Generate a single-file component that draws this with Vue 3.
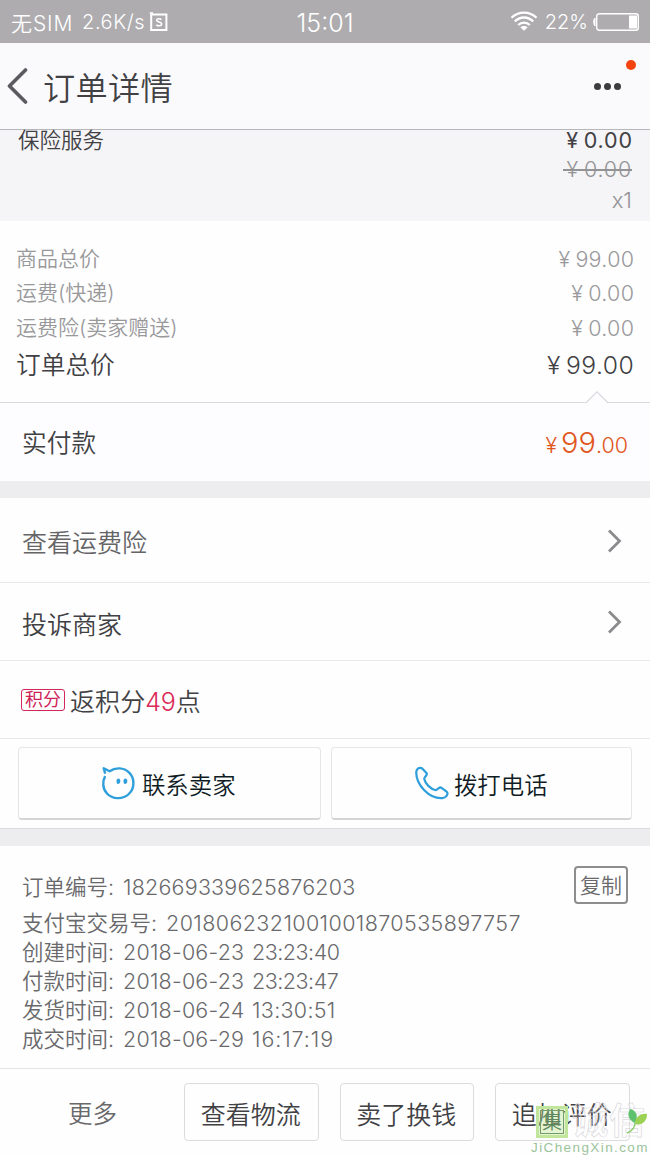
<script setup>
const fees = [
  { label: '商品总价', amount: '99.00' },
  { label: '运费(快递)', amount: '0.00' },
  { label: '运费险(卖家赠送)', amount: '0.00' },
]
const times = [
  { label: '创建时间:', date: '2018-06-23', time: '23:23:40', fit: 'tight' },
  { label: '付款时间:', date: '2018-06-23', time: '23:23:47', fit: 'tight' },
  { label: '发货时间:', date: '2018-06-24', time: '13:30:51', fit: 'wide' },
  { label: '成交时间:', date: '2018-06-29', time: '16:17:19', fit: 'loose' },
]
</script>

<template>
  <div class="screen">
    <div class="status">
      <div class="carrier">
        <span class="sim">无SIM</span><span class="speed">2.6K/s</span>
        <svg width="20" height="20" viewBox="0 0 20 20" fill="none" stroke="#fff">
          <path d="M2.2 2.5H17.4V18H2.2Z" stroke-width="2" />
          <path d="M.8 1H4" stroke-width="1.6" />
          <path d="M12.4 7.6C11 6.3 7.6 6.5 7.7 8.5C7.8 10.5 12.6 9.5 12.6 12C12.6 14.2 8.8 14.2 7.3 12.8" stroke-width="1.6" />
        </svg>
      </div>
      <div class="clock">15:01</div>
      <div class="power">
        <svg class="wifi" width="28" height="21" viewBox="0 0 28 21" fill="none" stroke="#fff" stroke-width="2.3">
          <path d="M1.5 6.7C8.5-.2 19.5-.2 26.5 6.7" />
          <path d="M4.8 10.4C10.2 5.2 17.8 5.2 23.2 10.4" />
          <path d="M8.2 14C11.6 10.7 16.4 10.7 19.8 14" />
          <path d="M10.3 16.3C12.4 14.4 15.6 14.4 17.7 16.3L14 19.7Z" fill="#fff" stroke="none" />
        </svg>
        <span class="percent">22%</span>
        <svg class="battery" width="47" height="20" viewBox="0 0 47 20">
          <rect x="3.7" y="1.7" width="41.6" height="16.6" rx="2.5" fill="none" stroke="#fff" stroke-width="1.4" />
          <rect x="36" y="3.5" width="8" height="13" fill="#fff" />
          <path d="M2 6V14C.3 13 .3 7 2 6Z" fill="#fff" stroke="#fff" />
        </svg>
      </div>
    </div>

    <header class="header">
      <svg class="back" width="22" height="38" viewBox="0 0 22 38" fill="none" stroke="#5b5a5e" stroke-width="3.6" stroke-linecap="round" stroke-linejoin="round">
        <path d="M19.5 3L3.5 19L19.5 35" />
      </svg>
      <h1>订单详情</h1>
      <div class="more"><i></i><i></i><i></i><b class="notice"></b></div>
    </header>

    <section class="product">
      <div class="line name"><span>保险服务</span><span class="price"><span class="yen">¥</span>0.00</span></div>
      <div class="old"><span class="yen">¥</span>0.00</div>
      <div class="count">x1</div>
    </section>

    <section class="totals">
      <div v-for="fee in fees" :key="fee.label" class="line fee">
        <span>{{ fee.label }}</span><span class="price"><span class="yen">¥</span>{{ fee.amount }}</span>
      </div>
      <div class="line total"><span>订单总价</span><span class="price"><span class="yen">¥</span>99.00</span></div>
    </section>

    <section class="paid">
      <svg class="notch" width="22" height="13" viewBox="0 0 22 13">
        <path d="M0 12L11 .8L22 12V13H0Z" fill="#fdfcfe" />
        <path d="M0 11.7L11 .8L22 11.7" fill="none" stroke="#dcdadf" stroke-width="1.2" />
      </svg>
      <span>实付款</span>
      <span class="paid-price"><span class="yen">¥</span><span class="big">99</span>.00</span>
    </section>

    <div class="gap"></div>

    <div class="row insurance">
      <span>查看运费险</span>
      <svg width="16" height="26" viewBox="0 0 16 26" fill="none" stroke="#8b8b8e" stroke-width="2.8"><path d="M3 2.5L13.5 13L3 23.5" /></svg>
    </div>
    <div class="row complain">
      <span>投诉商家</span>
      <svg width="16" height="26" viewBox="0 0 16 26" fill="none" stroke="#8b8b8e" stroke-width="2.8"><path d="M3 2.5L13.5 13L3 23.5" /></svg>
    </div>
    <div class="row points">
      <span class="tag">积分</span><span class="reward">返积分<em>49</em>点</span>
    </div>

    <div class="contacts">
      <button class="contact">
        <svg width="34" height="34" viewBox="0 0 34 34" fill="none" stroke="#2f9fdc" stroke-width="2.4" stroke-linejoin="round">
          <path d="M4.2 10.2C1.4 15.2 1.4 22.6 5.8 27.2C11.3 33.4 21.6 33.9 27.8 28C34 22 33.8 12.2 28.2 6.6C22.8 1.3 14.4 1.1 8.6 5.2L2.7 2.2L4.2 7.6" />
          <g fill="#2f9fdc" stroke="none"><ellipse cx="17.4" cy="15.2" rx="1.9" ry="2.8" /><ellipse cx="24.4" cy="15.2" rx="1.9" ry="2.8" /></g>
        </svg>
        <span>联系卖家</span>
      </button>
      <button class="contact phone">
        <svg width="35" height="35" viewBox="0 0 36 36" fill="none" stroke="#2f9fdc" stroke-width="2.3" stroke-linejoin="round">
          <path d="M2.3 6.4C2.4 2.6 6 .6 8.7 2.8L12.8 7.2C14.6 9.8 10.2 10.8 10.6 13.4C11.5 18.2 17 23.6 21.8 24.7C24.5 25.3 25 20.8 28.3 22.4L33.2 26C36 28.6 33.4 32.6 29.2 33C15.6 34 2.1 19.4 2.3 6.4Z" />
        </svg>
        <span>拨打电话</span>
      </button>
    </div>

    <div class="gap lower"></div>

    <section class="info">
      <div class="record number"><span class="key">订单编号:</span><span class="order">182669339625876203</span><button class="copy">复制</button></div>
      <div class="record trade"><span class="key">支付宝交易号:</span><span class="alipay">2018062321001001870535897757</span></div>
      <div v-for="entry in times" :key="entry.label" class="record">
        <span class="key">{{ entry.label }}</span><span class="date">{{ entry.date }}</span><span class="time" :class="entry.fit">{{ entry.time }}</span>
      </div>
    </section>

    <footer class="footer">
      <span class="extra">更多</span>
      <button>查看物流</button>
      <button>卖了换钱</button>
      <button>追加评价</button>
    </footer>

    <div class="watermark">
      <div class="brand">
        <span class="seal">集</span><span class="outline">诚信</span>
        <svg class="leaf" width="22" height="26" viewBox="0 0 22 26">
          <path d="M8 15C1 12 0 6 3 1C9 2 12 8 8 15Z" fill="#5fc06d" />
          <path d="M8 16C8 9 14 5 20 6C20 13 15 18 8 16Z" fill="#9bd254" />
          <path d="M8 15C8 20 5 23 0 25" fill="none" stroke="#8ccc66" stroke-width="1.4" />
        </svg>
      </div>
      <div class="site">JiChengXin.com</div>
    </div>
  </div>
</template>

<style>
body { background: #fefefe; overflow: hidden; }
</style>

<style scoped>
.screen { position: relative; width: 650px; height: 1155px; overflow: hidden; background: #fefefe; color: #414144; font-family: Inter, "Noto Sans CJK SC", sans-serif; font-weight: 350; box-sizing: border-box; }
.screen * { box-sizing: border-box; }
button { font: inherit; color: inherit; padding: 0; margin: 0; background: none; }
.status { height: 43px; background: #aeacaf; color: #fff; display: grid; grid-template-columns: 1fr 80px 1fr; align-items: center; font-size: 21px; }
.carrier { display: flex; align-items: center; padding-left: 11px; white-space: nowrap; }
.sim { width: 71px; letter-spacing: .9px; }
.speed { width: 67px; font-size: 20px; letter-spacing: .6px; }
.clock { text-align: center; font-size: 25px; padding-top: 2px; }
.power { display: flex; align-items: center; justify-content: flex-end; padding-right: 10px; }
.percent { font-size: 20px; margin: 1px 5px 0 7px; }
.header { height: 87px; background: #faf9fc; border-bottom: 1px solid #b7b6ba; display: flex; align-items: center; padding: 0 29px 0 6px; }
h1 { margin: 5px 0 0 15px; font-size: 32.2px; line-height: 40px; font-weight: 350; letter-spacing: .3px; }
.more { position: relative; margin-left: auto; display: flex; gap: 3px; }
.more i { width: 7px; height: 7px; border-radius: 50%; background: #3d3c3f; }
.notice { position: absolute; width: 10px; height: 10px; border-radius: 50%; background: #f5430f; right: -15px; top: -23px; }
.product { height: 91px; background: #f5f4f7; padding: 0 18px; text-align: right; font-size: 21.5px; }
.line { display: flex; justify-content: space-between; }
.name { height: 20px; line-height: 20px; }
.price { letter-spacing: .3px; margin-right: -.3px; }
.name .price { font-weight: 400; letter-spacing: .8px; margin-right: -.8px; }
.old, .count { color: #939396; }
.old { position: relative; width: fit-content; margin: 4px 0 0 auto; padding-left: 4px; line-height: 30px; letter-spacing: .8px; }
.old::after { content: ""; position: absolute; left: 0; right: 0; top: 15px; height: 1.5px; background: #939396; }
.count { line-height: 32px; font-size: 22px; }
.yen { display: inline-block; margin-right: 5px; }
.totals { height: 182px; border-bottom: 1px solid #dcdadf; padding: 21px 16px 0; }
.fee { height: 34.3px; line-height: 34px; font-size: 21px; color: #99999c; }
.fee .price { font-size: 21.5px; }
.total { height: 40px; line-height: 40px; font-size: 24.7px; }
.total .price { letter-spacing: .5px; }
.paid { position: relative; height: 78px; background: #fdfcfe; display: flex; align-items: center; justify-content: space-between; padding: 0 22px; font-size: 24.7px; }
.notch { position: absolute; left: 586px; top: -12px; }
.paid > span:first-of-type { margin-top: -2px; }
.paid-price { color: #e0561d; font-size: 21.5px; }
.paid-price .yen { margin-right: 4px; }
.big { font-size: 29px; }
.gap { height: 17px; background: #edecef; }
.lower { height: 18px; border-top: 1px solid #dbdadc; }
.row { display: flex; align-items: center; justify-content: space-between; padding: 1px 28px 0 22px; border-bottom: 1px solid #e9e8eb; font-size: 25px; }
.insurance { height: 85px; color: #656568; }
.complain { height: 78px; }
.complain > span { margin-top: 1px; }
.points { height: 78px; justify-content: flex-start; }
.tag { width: 44px; height: 22px; border: 1.5px solid #d3265a; border-radius: 3px; color: #cf2257; font-size: 18px; line-height: 20px; font-weight: 400; text-align: center; margin: -1px 5px 0 -1px; }
.reward { letter-spacing: .1px; }
em { font-style: normal; color: #dc2857; letter-spacing: -.2px; }
.contacts { height: 89px; padding: 8px 18px 0; display: flex; gap: 10px; }
.contact { flex: 1; height: 73px; border: 1.5px solid #e6e5e7; border-bottom: 2px solid #d5d4d6; border-radius: 4px; display: flex; align-items: center; justify-content: center; gap: 7px; color: #101c24; font-size: 23.4px; padding-right: 2px; }
.phone { gap: 5px; padding-right: 1px; }
.contact span { margin-top: 2px; }
.info { height: 222px; padding: 23px 22px 0; color: #69696c; font-size: 21.5px; }
.record { display: flex; height: 29px; line-height: 29px; white-space: nowrap; }
.number { height: 36px; line-height: 37px; }
.trade { height: 33px; line-height: 37px; }
.key { margin-right: 9px; }
.order { letter-spacing: .2px; }
.alipay { letter-spacing: .4px; }
.date { width: 129px; letter-spacing: .2px; }
.tight { letter-spacing: -.5px; }
.wide { letter-spacing: .3px; }
.loose { letter-spacing: .9px; }
.copy { margin: -3px 0 0 auto; width: 54px; height: 38px; border: 2px solid #8d8d90; border-radius: 4px; font-size: 21px; line-height: 35px; }
.footer { height: 87px; border-top: 1px solid #e4e3e6; display: flex; gap: 21px; padding: 14px 0 0; font-size: 25px; }
.extra { width: 163px; padding-left: 68px; line-height: 62px; color: #69696c; font-size: 24.5px; }
.footer button { width: 134.5px; height: 58px; border: 1.5px solid #dcdbde; border-radius: 4px; padding: 1px 1px 0 0; }
.watermark { position: absolute; left: 531px; top: 1103px; width: 119px; }
.brand { display: flex; height: 37px; align-items: center; padding-left: 5px; }
.seal { width: 32px; height: 32px; border: 3px solid #c2e59c; outline: 1.5px solid #729c6c; outline-offset: -5px; background: rgba(190, 228, 145, .4); color: #5c885c; font-size: 20px; line-height: 26px; text-align: center; flex: none; }
.outline { margin-left: 4px; font-size: 36px; line-height: 37px; letter-spacing: 1px; font-weight: 700; color: rgba(255, 255, 255, .2); -webkit-text-stroke: .7px #dcd9dd; white-space: nowrap; }
.leaf { position: absolute; left: 96px; top: 5px; }
.site { font: 400 13.5px/15px "Liberation Sans", sans-serif; letter-spacing: 1.4px; color: #9bc49b; white-space: nowrap; }
</style>
